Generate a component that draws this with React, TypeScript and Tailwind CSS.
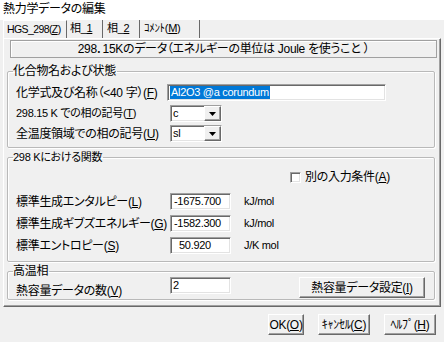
import React from "react";

const sunken =
  "bg-white border border-t-[#a0a0a0] border-l-[#a0a0a0] border-r-white border-b-white shadow-[inset_1px_1px_0_#696969,inset_-1px_-1px_0_#e3e3e3]";
const raised =
  "bg-[#f0f0f0] border border-t-white border-l-white border-r-[#696969] border-b-[#696969] shadow-[inset_-1px_-1px_0_#a0a0a0]";
const groupBox =
  "border border-[#b9b9b9] rounded-[2px] shadow-[inset_1px_1px_0_#ffffff,1px_1px_0_#ffffff]";

const U = ({ c }: { c: string }) => <span className="underline underline-offset-[1px]">{c}</span>;

const Select = ({ value }: { value: string }) => (
  <div className={`${sunken} ml-[3px] w-[52px] h-[17px] flex items-center`}>
    <span className="flex-1 pl-[2px] text-[11px]">{value}</span>
    <div className={`${raised} w-[17px] h-[15px] flex items-center justify-center`}>
      <svg width="7" height="4" viewBox="0 0 7 4">
        <path d="M0 0h7L3.5 4z" fill="#000" />
      </svg>
    </div>
  </div>
);

const NumRow = ({ label, m, value, unit, pad }: { label: string; m: string; value: string; unit: string; pad: string }) => (
  <div className="flex items-center h-[17px]">
    <div className="w-[154px]">
      {label}(<U c={m} />)
    </div>
    <div className={`${sunken} w-[61px] h-[17px] flex items-center text-[11px] ${pad}`}>{value}</div>
    <div className="ml-[13px] text-[11px]">{unit}</div>
  </div>
);

export default function App() {
  return (
    <div className="w-[444px] h-[342px] bg-[#f0f0f0] text-[12px] leading-none text-black whitespace-nowrap tracking-[-0.3px] font-['Liberation_Sans','Noto_Sans_CJK_JP',sans-serif] [font-feature-settings:'palt'] flex flex-col overflow-hidden">
      <div className="h-[20px] bg-white pl-[3px] pt-[3px]">熱力学データの編集</div>

      <div className="px-[3px]">
        {/* tabs */}
        <div className="flex h-[18px] text-[11px]">
          <div className="w-[64px] border-l border-t border-white border-r border-r-[#696969] pl-[3px] pt-[3px] bg-[#f0f0f0] text-[10.5px] tracking-[-0.6px]">
            HGS_298(<U c="Z" />)
          </div>
          <div className="w-[36px] border-r border-r-[#696969] pl-[3px] pt-[3px]">
            相_<U c="1" />
          </div>
          <div className="w-[37px] border-r border-r-[#696969] pl-[4px] pt-[3px]">
            相_<U c="2" />
          </div>
          <div className="w-[60px] border-r border-r-[#696969] pl-[4px] pt-[3px]">
            ｺﾒﾝﾄ(<U c="M" />)
          </div>
        </div>

        {/* panel */}
        <div className="h-[269px] border border-t-white border-l-white border-r-[#696969] border-b-[#696969] shadow-[inset_-1px_-1px_0_#a0a0a0] pt-[1px] pl-[3px] pr-[5px]">
          <div className="ml-[3px] mr-[-2px] h-[18px] border border-[#a0a0a0] shadow-[inset_1px_1px_0_#ffffff] flex items-center justify-center">
            298．15Kのデータ（エネルギーの単位は Joule を使うこと ）
          </div>

          <fieldset className={`${groupBox} mt-[7px] px-[8px] pt-[7px] pb-[5px]`}>
            <legend className="ml-[-3px] pr-[1px] leading-[12px]">化合物名および状態</legend>
            <div className="flex items-center h-[17px]">
              <div className="w-[151px]">
                化学式及び名称（&lt;40 字）(<U c="F" />)
              </div>
              <div className={`${sunken} w-[219px] h-[17px] flex items-center pl-[2px] text-[11px]`}>
                <span className="bg-[#0078d7] text-white px-[1px] leading-[13px]">Al2O3 @a corundum</span>
              </div>
            </div>
            <div className="flex items-center h-[17px] mt-[4px]">
              <div className="w-[151px] text-[11px]">
                298.15 K での相の記号(<U c="T" />)
              </div>
              <Select value="c" />
            </div>
            <div className="flex items-center h-[17px] mt-[3px]">
              <div className="w-[151px]">
                全温度領域での相の記号(<U c="U" />)
              </div>
              <Select value="sl" />
            </div>
          </fieldset>

          <fieldset className={`${groupBox} mt-[3px] px-[8px] pt-[8px] pb-[7px]`}>
            <legend className="ml-[-3px] pr-[1px] leading-[12px] text-[11px]">298 Kにおける関数</legend>
            <div className="flex items-center h-[12px] pl-[274px] gap-[4px]">
              <div className={`${sunken} w-[11px] h-[11px]`} />
              <span>
                別の入力条件(<U c="A" />)
              </span>
            </div>
            <div className="flex flex-col gap-[5px] mt-[10px]">
              <NumRow label="標準生成エンタルピー" m="L" value="-1675.700" unit="kJ/mol" pad="pl-[3px]" />
              <NumRow label="標準生成ギブズエネルギー" m="G" value="-1582.300" unit="kJ/mol" pad="pl-[3px]" />
              <NumRow label="標準エントロピー" m="S" value="50.920" unit="J/K mol" pad="pl-[8px]" />
            </div>
          </fieldset>

          <fieldset className={`${groupBox} mt-[3px] px-[8px] pb-[2px]`}>
            <legend className="ml-[-3px] pr-[1px] leading-[12px]">高温相</legend>
            <div className="flex items-start h-[20px]">
              <div className="w-[154px] pt-[8px]">
                熱容量データの数(<U c="V" />)
              </div>
              <div className={`${sunken} w-[61px] h-[17px] flex items-center pl-[2px] text-[11px]`}>2</div>
              <div className={`${raised} ml-[68px] w-[126px] h-[21px] flex items-center justify-center`}>
                熱容量データ設定(<U c="I" />)
              </div>
            </div>
          </fieldset>
        </div>
      </div>

      {/* buttons */}
      <div className="flex justify-end gap-[14px] pr-[8px] mt-[7px] text-[12px]">
        <div className={`${raised} w-[36px] h-[21px] flex items-center justify-center`}>
          OK(<U c="O" />)
        </div>
        <div className={`${raised} w-[52px] h-[21px] flex items-center justify-center`}>
          ｷｬﾝｾﾙ(<U c="C" />)
        </div>
        <div className={`${raised} w-[52px] h-[21px] flex items-center justify-center`}>
          ﾍﾙﾌﾟ(<U c="H" />)
        </div>
      </div>
    </div>
  );
}
